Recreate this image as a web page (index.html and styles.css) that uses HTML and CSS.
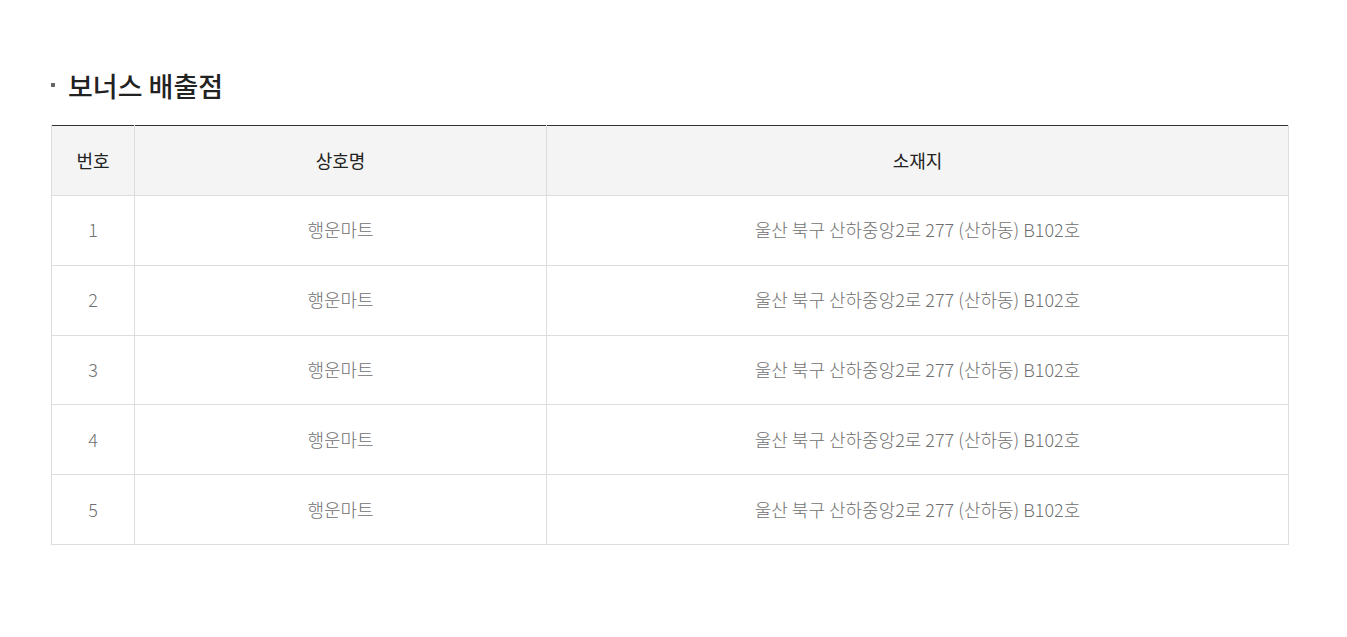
FILE: index.html
```html
<!DOCTYPE html>
<html>
<head>
<meta charset="utf-8">
<link rel="stylesheet" href="styles.css">
</head>
<body>

<!-- 보너스 배출점 -->
<div class="wrap">

    <h3 class="tit">보너스 배출점</h3>

    <table class="tbl">
        <colgroup>
            <col class="c1">
            <col class="c2">
            <col>
        </colgroup>
        <thead>
            <tr>
                <th>번호</th>
                <th>상호명</th>
                <th>소재지</th>
            </tr>
        </thead>
        <tbody>
            <tr><td>1</td><td>행운마트</td><td>울산 북구 산하중앙2로 277 (산하동) B102호</td></tr>
            <tr><td>2</td><td>행운마트</td><td>울산 북구 산하중앙2로 277 (산하동) B102호</td></tr>
            <tr><td>3</td><td>행운마트</td><td>울산 북구 산하중앙2로 277 (산하동) B102호</td></tr>
            <tr><td>4</td><td>행운마트</td><td>울산 북구 산하중앙2로 277 (산하동) B102호</td></tr>
            <tr><td>5</td><td>행운마트</td><td>울산 북구 산하중앙2로 277 (산하동) B102호</td></tr>
        </tbody>
    </table>

</div>

</body>
</html>
```

FILE: styles.css
```css
body
{
  margin: 0;
  background: #fff;
  font-family: "Noto Sans CJK KR", "Noto Sans", sans-serif;
}

.wrap
{
  padding: 67px 58px 0 51px;
}

/* 타이틀 */
.tit
{
  position: relative;
  margin: 0 0 20px 0;
  padding-left: 17px;
  font-size: 27px;
  font-weight: 500;
  line-height: 38px;
  color: #222;
}

.tit:before
{
  content: "";
  position: absolute;
  left: 0;
  top: 16px;
  width: 4px;
  height: 4px;
  background: #666;
}

/* 표 */
.tbl
{
  width: 1238px;
  border-collapse: collapse;
  border-top: 1px solid #333;
  table-layout: fixed;
}

.tbl .c1
{
  width: 83px;
}

.tbl .c2
{
  width: 412px;
}

.tbl th,
.tbl td
{
  padding: 0 0 2px 0;
  border: 1px solid #ddd;
  text-align: center;
  font-size: 18px;
}

.tbl thead th
{
  height: 67px;
  border-top: 0;
  background: #f4f4f4;
  font-weight: 400;
  color: #222;
}

.tbl td
{
  height: 66.8px;
  font-weight: 300;
  color: #707070;
}
```
